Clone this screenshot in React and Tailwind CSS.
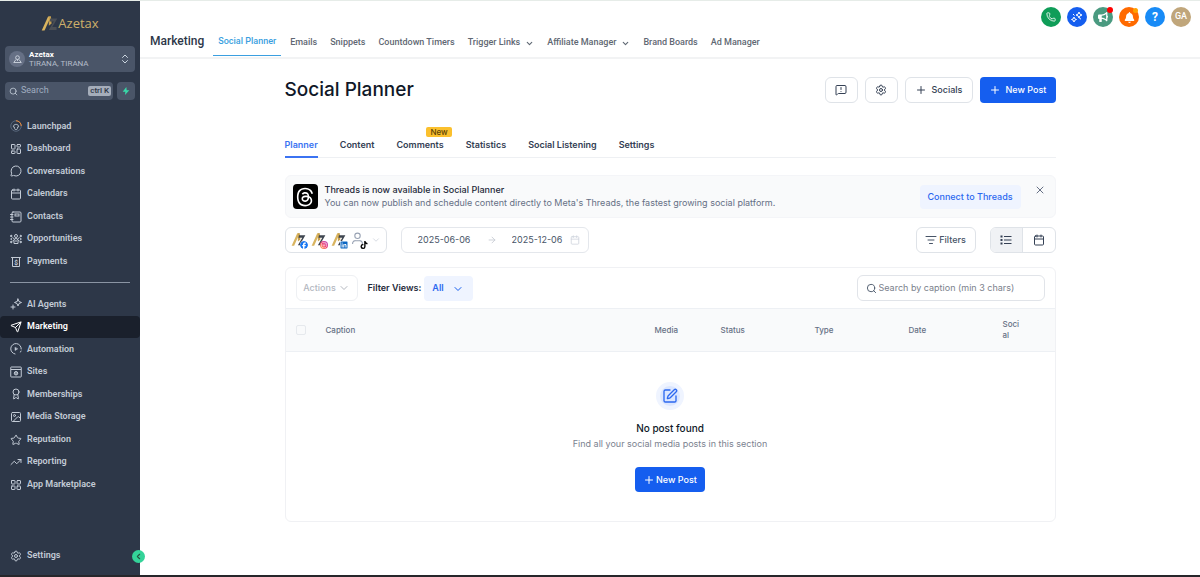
import React, { useState } from 'react';
import {
  ArrowRight,
  Award,
  Calendar,
  ChevronDown,
  ChevronLeft,
  ChevronsUpDown,
  Image,
  LayoutDashboard,
  LayoutGrid,
  ListFilter,
  MessageCircle,
  MessageSquareWarning,
  Phone,
  Plus,
  Search,
  Send,
  Settings,
  SquarePen,
  Star,
  TrendingUp,
  X,
} from 'lucide-react';
import { FaBell, FaBullhorn, FaFacebook, FaInstagram, FaLinkedin, FaThreads, FaTiktok } from 'react-icons/fa6';

const LaunchpadIcon = ({ className }) => (
  <svg viewBox="0 0 24 24" fill="none" strokeWidth="1.5" className={className}>
    <circle cx="12" cy="12" r="10.5" stroke="#64748b" />
    <path d="M12 1.5A10.5 10.5 0 0 1 22.5 12" stroke="#ed8936" strokeWidth="2" />
    <path d="M9 17v-3H6.500a5.500 5.500 0 0 1 11 0H15v3a3 2 0 0 1-6 0Z" stroke="currentColor" />
  </svg>
);

const ContactsIcon = ({ className }) => (
  <svg viewBox="0 0 24 24" fill="none" stroke="currentColor" strokeWidth="2" strokeLinecap="round" className={className}>
    <rect x="4" y="2" width="18" height="20" rx="2" />
    <path d="M1 7h5M1 12h5M1 17h5" />
    <rect x="10" y="6" width="8" height="4" />
  </svg>
);

const OpportunitiesIcon = ({ className }) => (
  <svg viewBox="0 0 24 24" fill="none" stroke="currentColor" strokeWidth="2" className={className}>
    <circle cx="12" cy="6" r="3" />
    <path d="M8 21v-6a4 4 0 0 1 8 0v6ZM12 14v4" />
    <path d="M5 9l4 3M19 9l-4 3M5 16l3-1M19 16l-3-1" />
    <g fill="currentColor">
      <circle cx="2.500" cy="6" r="1.500" />
      <circle cx="21.500" cy="6" r="1.500" />
      <circle cx="2.500" cy="12" r="1" />
      <circle cx="21.500" cy="12" r="1" />
      <circle cx="2.500" cy="18" r="1.500" />
      <circle cx="21.500" cy="18" r="1.500" />
    </g>
  </svg>
);

const PaymentsIcon = ({ className }) => (
  <svg viewBox="0 0 24 24" fill="none" stroke="currentColor" strokeWidth="2" strokeLinecap="round" className={className}>
    <path d="M3 3h18M5 3v18h14V3" />
    <text x="12" y="17" textAnchor="middle" fontSize="13" fontWeight="700" fill="currentColor" stroke="none">$</text>
  </svg>
);

const AgentsIcon = ({ className }) => (
  <svg viewBox="0 0 24 24" fill="none" stroke="currentColor" strokeWidth="2" strokeLinecap="round" strokeLinejoin="round" className={className}>
    <path d="M16 2l2 5 5 2-5 2-2 5-2-5-5-2 5-2Z" />
    <path d="M6 14v8M2 18h8" />
  </svg>
);

const AutomationIcon = ({ className }) => (
  <svg viewBox="0 0 24 24" fill="none" stroke="currentColor" strokeWidth="2" strokeLinecap="round" className={className}>
    <path d="M10 22A10.500 10.500 0 1 1 22.500 12M22 16l-1 2" />
    <path d="M10 9v6l5-3Z" fill="currentColor" strokeWidth="1" strokeLinejoin="round" />
  </svg>
);

const SitesIcon = ({ className }) => (
  <svg viewBox="0 0 24 24" fill="none" stroke="currentColor" strokeWidth="2" className={className}>
    <rect x="1.500" y="2" width="21" height="20" rx="1" />
    <path d="M2 7h20" />
    <circle cx="12" cy="14.500" r="3.500" fill="currentColor" fillOpacity="0.600" />
  </svg>
);

const SparkIcon = ({ className }) => (
  <svg viewBox="0 0 24 24" fill="none" stroke="currentColor" strokeWidth="2" strokeLinejoin="round" className={className}>
    <path d="M16 2l1.800 4.200L22 8l-4.200 1.800L16 14l-1.800-4.200L10 8l4.200-1.800Z" />
    <path d="M6 12l1.500 3.500L11 17l-3.500 1.500L6 22l-1.500-3.500L1 17l3.500-1.500Z" />
    <path d="M4 6l3 3M20 16l-3-1" />
  </svg>
);

const BrandMark = ({ className, dark }) => (
  <svg viewBox="0 0 24 24" className={className}>
    <path d="M1 22 10 2h4L5 22Z" fill="#d9b45f" />
    <path d="M11 2h3l1 10-4 3Z" fill="#c7a04e" />
    <path d="M13 5h10l-7 12h6v4H11l7-12h-6Z" fill={dark} />
  </svg>
);

const mainNav = [
  { label: 'Launchpad', icon: LaunchpadIcon },
  { label: 'Dashboard', icon: LayoutDashboard },
  { label: 'Conversations', icon: MessageCircle },
  { label: 'Calendars', icon: Calendar },
  { label: 'Contacts', icon: ContactsIcon },
  { label: 'Opportunities', icon: OpportunitiesIcon },
  { label: 'Payments', icon: PaymentsIcon },
];

const toolsNav = [
  { label: 'AI Agents', icon: AgentsIcon },
  { label: 'Marketing', icon: Send, active: true },
  { label: 'Automation', icon: AutomationIcon },
  { label: 'Sites', icon: SitesIcon },
  { label: 'Memberships', icon: Award },
  { label: 'Media Storage', icon: Image },
  { label: 'Reputation', icon: Star },
  { label: 'Reporting', icon: TrendingUp },
  { label: 'App Marketplace', icon: LayoutGrid },
];

const topLinks = [
  { label: 'Emails' },
  { label: 'Snippets' },
  { label: 'Countdown Timers' },
  { label: 'Trigger Links', menu: true },
  { label: 'Affiliate Manager', menu: true },
  { label: 'Brand Boards' },
  { label: 'Ad Manager' },
];

const tabs = ['Planner', 'Content', 'Comments', 'Statistics', 'Social Listening', 'Settings'];

const NavItem = ({ label, icon: Icon, active }) => (
  <a
    href="#"
    className={`flex items-center gap-[5px] rounded px-[10px] text-[9px] font-semibold ${active ? 'bg-[#1a202c] text-white' : 'text-[#c3cbd6]'}`}
  >
    <Icon className="size-3 shrink-0" />
    <span>{label}</span>
  </a>
);

const Sidebar = () => (
  <aside className="relative flex w-[140px] shrink-0 flex-col bg-[#2d3748] font-['Roboto',sans-serif]">
    <div className="flex h-[45px] items-center justify-center">
      <BrandMark className="size-[17px]" dark="#4b4f55" />
      <span className="font-['Open_Sans',sans-serif] text-[13px] text-[#cdb06a]">Azetax</span>
    </div>

    <button className="mx-[5px] flex h-[26px] items-center gap-1 rounded bg-[#4a5568] px-1 text-left">
      <span className="flex size-4 items-center justify-center rounded-full bg-[#667085]">
        <svg viewBox="0 0 24 24" fill="none" stroke="#e2e8f0" strokeWidth="2" className="size-[9px]">
          <circle cx="12" cy="7" r="5" />
          <path d="M8 12l-6 8h20l-6-8M12 12v4" />
        </svg>
      </span>
      <span className="flex-1">
        <span className="block text-[8px] leading-[9px] font-bold text-white">Azetax</span>
        <span className="block text-[8px] leading-[9px] text-[#b4bcc9]">TIRANA, TIRANA</span>
      </span>
      <ChevronsUpDown className="size-3 text-[#cbd5e0]" />
    </button>

    <div className="mx-[5px] mt-[10px] flex gap-1">
      <label className="flex h-[18px] min-w-0 flex-1 items-center gap-[3px] rounded-sm bg-[#4a5568] pr-[2px] pl-1">
        <Search className="size-[9px] shrink-0 text-[#cbd5e0]" />
        <input aria-label="Search" placeholder="Search" className="w-full min-w-0 bg-transparent text-[9px] outline-none placeholder:text-[#a0aec0]" />
        <kbd className="shrink-0 rounded-xs bg-[#a5adba] px-[2px] font-['Roboto',sans-serif] text-[8px] leading-[10px] font-medium text-[#2d3748]">ctrl K</kbd>
      </label>
      <button aria-label="Quick actions" className="flex size-[18px] items-center justify-center rounded-sm bg-[#4a5568]">
        <svg viewBox="0 0 24 24" className="size-2 text-[#38d9a9]">
          <path d="M13 0 2 14h8l-1 10L22 10h-8Z" fill="currentColor" />
        </svg>
      </button>
    </div>

    <nav className="mt-[15px] grid h-[158px] auto-rows-fr">
      {mainNav.map((item) => (
        <NavItem key={item.label} {...item} />
      ))}
    </nav>
    <hr className="mx-[10px] mt-[9px] border-[#8a94a3]" />
    <nav className="mt-[10px] grid h-[203px] auto-rows-fr">
      {toolsNav.map((item) => (
        <NavItem key={item.label} {...item} />
      ))}
    </nav>

    <div className="mt-auto mb-[7px] grid h-6">
      <NavItem label="Settings" icon={Settings} />
    </div>
    <button aria-label="Collapse sidebar" className="absolute -right-[5px] bottom-3 flex size-[13px] items-center justify-center rounded-full bg-[#34d399] text-[#22543d]">
      <ChevronLeft className="size-[9px]" strokeWidth={3} />
    </button>
  </aside>
);

const TopBar = () => (
  <header className="border-b-2 border-[#f2f3f4] font-['Roboto',sans-serif]">
    <div className="flex h-[56px] items-stretch">
      <h2 className="flex items-center pt-6 pl-[10px] text-[12px] font-medium text-[#2d3748]">Marketing</h2>
      <nav className="ml-[9px] flex text-[9px] font-medium text-[#5f6873]">
        <a href="#" className="mb-px flex items-center border-b border-[#3b9fe0] px-[5px] pt-7 text-[#3b9fe0]">Social Planner</a>
        <div className="ml-[9px] flex items-center gap-[13px] pt-7">
          {topLinks.map((link) => (
            <a key={link.label} href="#" className="flex items-center gap-[5px]">
              {link.label}
              {link.menu && <ChevronDown className="size-[9px]" strokeWidth={3} />}
            </a>
          ))}
        </div>
      </nav>
      <div className="mt-[6px] mr-[9px] ml-auto flex h-5 gap-[6px] text-white">
        <button aria-label="Call" className="flex size-5 items-center justify-center rounded-full bg-[#0f9d58]">
          <Phone className="size-[10px]" />
        </button>
        <button aria-label="Assistant" className="flex size-5 items-center justify-center rounded-full bg-[#155eef]">
          <SparkIcon className="size-3" />
        </button>
        <button aria-label="Announcements" className="relative flex size-5 items-center justify-center rounded-full bg-[#4a9a80]">
          <FaBullhorn className="size-[10px]" />
          <span className="absolute top-0 right-0 size-[6px] rounded-full bg-[#ff0000]" />
        </button>
        <button aria-label="Notifications" className="relative flex size-5 items-center justify-center rounded-full bg-[#ff6a00]">
          <FaBell className="size-[11px]" />
          <span className="absolute top-px right-px size-[5px] rounded-full bg-[#ffa000]" />
        </button>
        <button aria-label="Help" className="flex size-5 items-center justify-center rounded-full bg-[#188bf6] text-[12px] font-bold">?</button>
        <button aria-label="Account" className="flex size-5 items-center justify-center rounded-full bg-[#c0a67b] text-[9px] font-medium">GA</button>
      </div>
    </div>
  </header>
);

const AccountPicker = () => (
  <button aria-label="Social accounts" className="flex h-[26px] w-[102px] items-center gap-1 rounded-md border border-[#dfe3e8] px-[5px]">
    <span className="relative size-4">
      <BrandMark className="size-[15px]" dark="#3f4650" />
      <FaFacebook className="absolute -right-px -bottom-px size-2 rounded-full bg-white text-[#1877f2]" />
    </span>
    <span className="relative size-4">
      <BrandMark className="size-[15px]" dark="#3f4650" />
      <span className="absolute -right-px -bottom-px flex size-2 items-center justify-center rounded-full bg-linear-to-tr from-[#fdb347] via-[#f0386b] to-[#b13cc9] text-white">
        <FaInstagram className="size-[6px]" />
      </span>
    </span>
    <span className="relative size-4">
      <BrandMark className="size-[15px]" dark="#3f4650" />
      <FaLinkedin className="absolute -right-px -bottom-px size-2 bg-white text-[#0a66c2]" />
    </span>
    <span className="relative size-4">
      <svg viewBox="0 0 24 24" fill="none" stroke="#98a2b3" strokeWidth="2" className="size-[13px]">
        <circle cx="12" cy="7" r="5" />
        <path d="M3 22v-2a5 5 0 0 1 5-4h8a5 5 0 0 1 5 4v2" />
      </svg>
      <FaTiktok className="absolute -right-px -bottom-px size-2 text-black" />
    </span>
    <ChevronDown className="size-[10px] text-[#d0d5dd]" />
  </button>
);

const PostsTable = () => {
  const [search, setSearch] = useState('');

  return (
    <section className="mt-[14px] rounded-md border border-[#f0f1f4]">
      <div className="flex h-10 items-center px-[10px]">
        <button disabled className="flex h-[26px] w-[62px] items-center justify-center gap-[2px] rounded-md border border-[#eef0f3] text-[9px] font-medium text-[#b3b7bf]">
          Actions
          <ChevronDown className="size-3" />
        </button>
        <label htmlFor="views" className="ml-[10px] text-[9px] font-semibold text-[#1d2939]">Filter Views:</label>
        <div className="relative ml-[3px]">
          <select id="views" className="block h-[25px] w-[49px] appearance-none rounded bg-[#eff4ff] pl-2 text-[9px] font-semibold text-[#2c68f0]">
            <option>All</option>
          </select>
          <ChevronDown className="pointer-events-none absolute top-[7px] right-[9px] size-3 text-[#155eef]" />
        </div>
        <label className="ml-auto flex h-[26px] w-[188px] items-center gap-[2px] rounded-md border border-[#e1e4e9] px-2">
          <Search className="size-[11px] shrink-0 text-[#475467]" />
          <input
            aria-label="Search by caption"
            value={search}
            onChange={(e) => setSearch(e.target.value)}
            placeholder="Search by caption (min 3 chars)"
            className="w-full min-w-0 text-[9px] outline-none placeholder:text-[#7b818c]"
          />
        </label>
      </div>

      <table className="w-full table-fixed border-y border-[#edf0f4] bg-[#f9fafb] text-left text-[8px] leading-[11px] text-[#667085]">
        <thead>
          <tr className="h-[43px]">
            <th className="w-10 pl-[10px]">
              <input type="checkbox" aria-label="Select all posts" className="block size-[10px] appearance-none rounded-xs border border-[#e6e9ed]" />
            </th>
            <th className="font-medium">Caption</th>
            <th className="w-[66px] font-medium">Media</th>
            <th className="w-[94px] font-medium">Status</th>
            <th className="w-[94px] font-medium">Type</th>
            <th className="w-[94px] font-medium">Date</th>
            <th className="w-[52px] pr-[34px] font-medium break-all">Social</th>
          </tr>
        </thead>
      </table>

      <div className="flex flex-col items-center pt-[30px] pb-[29px]">
        <div className="flex size-7 items-center justify-center rounded-full border-4 border-[#eff4ff] bg-[#dbe6ff]">
          <SquarePen className="size-4 shrink-0 text-[#2c68f0]" />
        </div>
        <h3 className="mt-[10px] text-[10px] leading-4 font-medium text-[#101828]">No post found</h3>
        <p className="text-[9px] leading-4 text-[#7b828f]">Find all your social media posts in this section</p>
        <button className="mt-[15px] flex h-[25px] w-[70px] items-center justify-center gap-px rounded bg-[#155eef] text-[9px] font-medium text-white">
          <Plus className="size-3" />
          New Post
        </button>
      </div>
    </section>
  );
};

const App = () => {
  return (
    <div className="flex min-h-screen border-t border-b-2 border-t-[#e6ece8] border-b-[#26262a] bg-white">
      <Sidebar />
      <div className="min-w-0 flex-1">
        <TopBar />
        <main className="mx-auto w-full max-w-[771px] pt-[18px] font-['Inter',sans-serif]">
          <div className="flex items-center gap-[7px]">
            <h1 className="mr-auto text-[19px] leading-[26px] font-medium text-[#101828]">Social Planner</h1>
            <button aria-label="Feedback" className="flex h-[26px] w-[33px] items-center justify-center rounded-md border border-[#dfe3e8] text-[#344054]">
              <MessageSquareWarning className="size-3" />
            </button>
            <button aria-label="Planner settings" className="flex h-[26px] w-[33px] items-center justify-center rounded-md border border-[#dfe3e8] text-[#344054]">
              <Settings className="size-3" />
            </button>
            <button className="flex h-[26px] w-[68px] items-center justify-center gap-[5px] rounded-md border border-[#dfe3e8] text-[9px] font-medium text-[#344054]">
              <Plus className="size-3" />
              Socials
            </button>
            <button className="flex h-[26px] w-[76px] items-center justify-center gap-[5px] rounded bg-[#155eef] text-[9px] font-medium text-white">
              <Plus className="size-3" />
              New Post
            </button>
          </div>

          <nav className="mt-[29px] flex gap-[22px] border-b border-[#eef0f3] text-[9px] font-semibold text-[#344054]">
            {tabs.map((tab) => (
              <a
                key={tab}
                href="#"
                className={`relative -mb-px h-[26px] border-b-2 pt-[6px] leading-[13px] ${tab === 'Planner' ? 'border-[#3b73f2] text-[#3b73f2]' : 'border-transparent'}`}
              >
                {tab}
                {tab === 'Comments' && (
                  <span className="absolute -top-[5px] -right-2 rounded-xs bg-[#fbc02d] px-1 text-[8px] leading-[10px] font-medium text-[#5c4305]">New</span>
                )}
              </a>
            ))}
          </nav>

          <section className="mt-[17px] flex h-[43px] items-center rounded-md border border-[#f4f5f8] bg-[#f9fafb] pr-[9px] pl-[7px]">
            <div className="flex size-[25px] items-center justify-center rounded bg-black text-white">
              <FaThreads className="size-5" />
            </div>
            <div className="mb-[2px] ml-[7px] text-[9px] leading-[13px]">
              <h2 className="font-medium text-[#1d2939]">Threads is now available in Social Planner</h2>
              <p className="text-[#667085]">You can now publish and schedule content directly to Meta's Threads, the fastest growing social platform.</p>
            </div>
            <button className="ml-auto h-6 w-[101px] rounded bg-[#eff4ff] text-[9px] font-medium text-[#2c68f0]">Connect to Threads</button>
            <button aria-label="Dismiss" className="mb-[14px] ml-[13px] text-[#667085]">
              <X className="size-3" />
            </button>
          </section>

          <div className="mt-[9px] flex items-center">
            <AccountPicker />
            <div className="ml-[14px] flex h-[26px] w-[188px] items-center rounded-md border border-[#e4e7ec] pr-2 pl-4 text-[9px] text-[#475467]">
              <input aria-label="Start date" defaultValue="2025-06-06" className="w-[54px] outline-none" />
              <ArrowRight className="mx-[15px] size-[10px] text-[#c4c9d1]" />
              <input aria-label="End date" defaultValue="2025-12-06" className="w-[54px] outline-none" />
              <Calendar className="ml-auto size-[10px] text-[#d0d5dd]" />
            </div>
            <button className="ml-auto flex h-[26px] w-[60px] items-center justify-center gap-[2px] rounded-md border border-[#dfe3e8] text-[9px] font-medium text-[#475467]">
              <ListFilter className="size-3" />
              Filters
            </button>
            <div className="ml-[14px] flex h-[26px] w-[66px] overflow-hidden rounded-md border border-[#dfe3e8] text-[#344054]">
              <button aria-label="List view" className="flex flex-1 items-center justify-center border-r border-[#dfe3e8] bg-[#f0f2f5]">
                <svg viewBox="0 0 24 24" fill="none" stroke="currentColor" strokeWidth="2" className="size-3">
                  <path d="M8 5h15M8 12h15M8 19h15" />
                  <path d="M1 5h4M1 12h4M1 19h4" strokeWidth="4" />
                </svg>
              </button>
              <button aria-label="Calendar view" className="flex flex-1 items-center justify-center">
                <Calendar className="size-3" />
              </button>
            </div>
          </div>

          <PostsTable />
        </main>
      </div>
    </div>
  );
};

export default App;
